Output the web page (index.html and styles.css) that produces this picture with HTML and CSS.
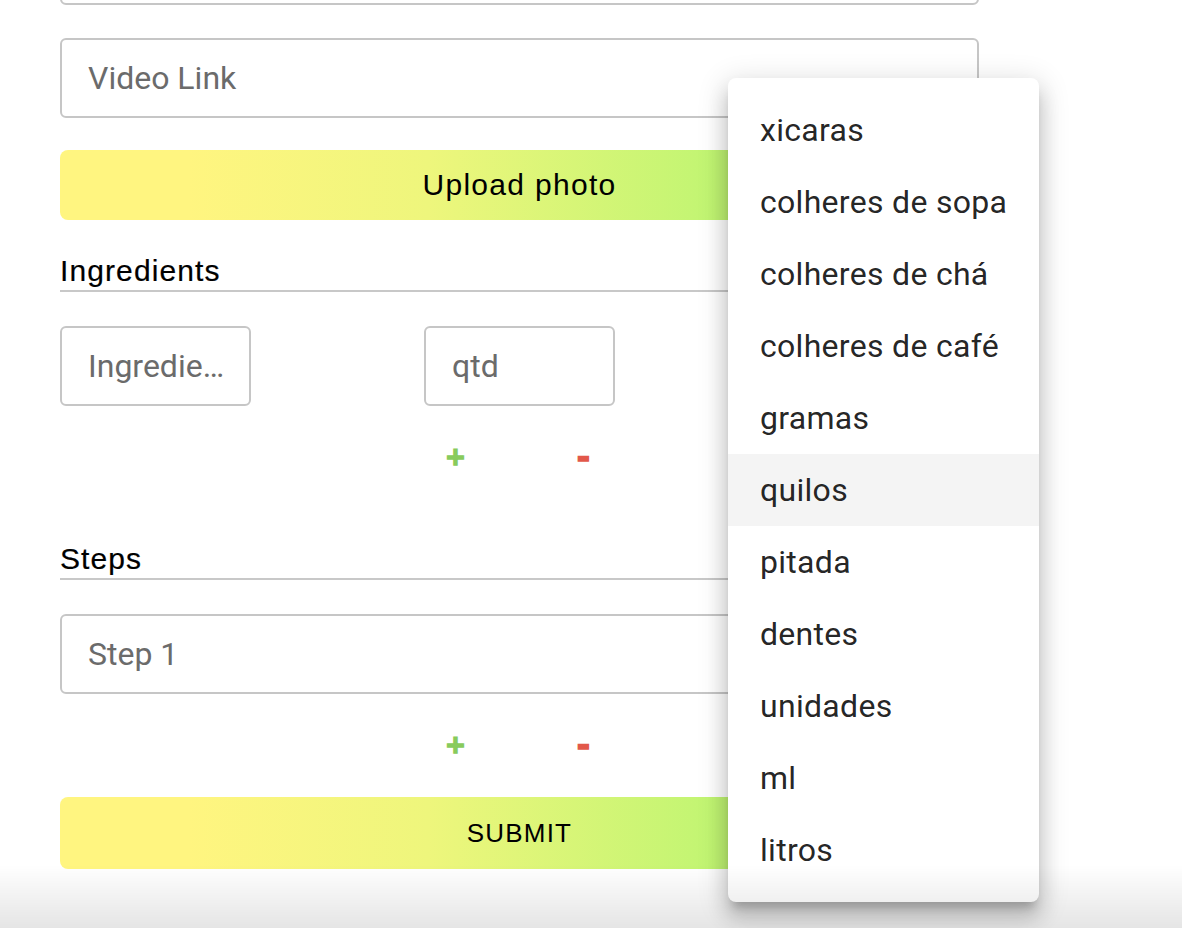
FILE: index.html
```html
<!DOCTYPE html>
<html lang="en">
<head>
<meta charset="utf-8">
<title>New recipe</title>
<link rel="stylesheet" href="styles.css">
</head>
<body>
<main class="page">
  <form class="recipe-form">
    <input class="field field--wide" type="text" placeholder="Description">
    <input class="field field--wide field--next" type="text" placeholder="Video Link">
    <button class="grad-btn grad-btn--upload" type="button">Upload photo</button>

    <section class="group group--ingredients">
      <h2 class="group-title">Ingredients</h2>
      <div class="ing-row">
        <input class="field field--small" type="text" placeholder="Ingredient">
        <input class="field field--small" type="text" placeholder="qtd">
        <div class="field field--small field--select"></div>
      </div>
      <div class="pm-row">
        <button class="pm-btn pm-btn--plus" type="button">+</button>
        <button class="pm-btn pm-btn--minus" type="button">-</button>
      </div>
    </section>

    <section class="group group--steps">
      <h2 class="group-title">Steps</h2>
      <input class="field field--wide field--step" type="text" placeholder="Step 1">
      <div class="pm-row">
        <button class="pm-btn pm-btn--plus" type="button">+</button>
        <button class="pm-btn pm-btn--minus" type="button">-</button>
      </div>
    </section>

    <button class="grad-btn grad-btn--submit" type="button">SUBMIT</button>
  </form>
</main>

<ul class="menu" role="listbox">
  <li class="menu-item">xicaras</li>
  <li class="menu-item">colheres de sopa</li>
  <li class="menu-item">colheres de chá</li>
  <li class="menu-item">colheres de café</li>
  <li class="menu-item">gramas</li>
  <li class="menu-item menu-item--hover">quilos</li>
  <li class="menu-item">pitada</li>
  <li class="menu-item">dentes</li>
  <li class="menu-item">unidades</li>
  <li class="menu-item">ml</li>
  <li class="menu-item">litros</li>
</ul>

<div class="bottom-fade"></div>
</body>
</html>
```

FILE: styles.css
```css
* {
  box-sizing: border-box;
}

html,
body {
  margin: 0;
  height: 100%;
  overflow: hidden;
  background: #ffffff;
}

body {
  font-family: "Liberation Sans", Arial, sans-serif;
  color: #000;
}

.page {
  padding-left: 60px;
  width: 979px;
}

.recipe-form {
  display: flex;
  flex-direction: column;
  margin-top: -75px;
}

.field {
  display: block;
  height: 80px;
  border: 2px solid #c6c6c6;
  border-radius: 6px;
  padding: 0 24px 0 26px;
  font-family: Roboto, "Noto Sans", sans-serif;
  font-size: 32px;
  color: #222;
  background: #fff;
  outline: none;
  text-overflow: ellipsis;
  margin: 0;
}

.field::placeholder {
  color: #6b6b6b;
  opacity: 1;
}

.field--wide {
  width: 100%;
}

.field--next {
  margin-top: 33px;
}

.field--small {
  width: 191px;
}

.grad-btn {
  display: block;
  width: 100%;
  border: 0;
  border-radius: 8px;
  background: linear-gradient(to right, #fff580 14%, #eef67c 40%, #c0f572 72%, #a9ef66 100%);
  font-family: "Liberation Sans", Arial, sans-serif;
  color: #000;
  padding: 0;
  cursor: pointer;
}

.grad-btn--upload {
  height: 70px;
  margin-top: 32px;
  font-size: 30px;
  letter-spacing: 1.3px;
}

.grad-btn--submit {
  height: 72px;
  margin-top: 32px;
  font-size: 26px;
  letter-spacing: 1.2px;
}

.group {
  display: flex;
  flex-direction: column;
}

.group--ingredients {
  margin-top: 35px;
}

.group--steps {
  margin-top: 66px;
}

.group-title {
  margin: 0;
  font-weight: 400;
  font-size: 30px;
  line-height: 32px;
  letter-spacing: 1.1px;
  padding-bottom: 3px;
  border-bottom: 2px solid #c8c8c8;
  -webkit-text-stroke: 0.2px #000;
}

.ing-row {
  display: flex;
  justify-content: space-between;
  margin-top: 34px;
}

.field--step {
  margin-top: 34px;
}

.pm-row {
  display: flex;
  justify-content: center;
  gap: 88px;
  height: 40px;
  margin-top: 31px;
}

.pm-btn {
  width: 40px;
  height: 40px;
  padding: 0;
  border: 0;
  background: none;
  font-family: "DejaVu Sans", sans-serif;
  font-weight: 700;
  line-height: 40px;
  cursor: pointer;
}

.pm-btn--plus {
  color: #88cb5c;
  font-size: 25px;
  -webkit-text-stroke: 1.6px #88cb5c;
}

.pm-btn--minus {
  color: #e2584a;
  font-size: 32px;
  -webkit-text-stroke: 1.6px #e2584a;
}

.menu {
  position: absolute;
  left: 728px;
  top: 78px;
  width: 311px;
  margin: 0;
  padding: 16px 0;
  list-style: none;
  background: #fff;
  border-radius: 8px;
  box-shadow: 0 10px 10px -5px rgba(0, 0, 0, 0.2),
              0 16px 20px 2px rgba(0, 0, 0, 0.14),
              0 6px 28px 5px rgba(0, 0, 0, 0.12);
}

.menu-item {
  height: 72px;
  line-height: 72px;
  padding-left: 32px;
  font-family: Roboto, "Noto Sans", sans-serif;
  font-size: 32px;
  letter-spacing: 0.3px;
  color: rgba(0, 0, 0, 0.87);
  white-space: nowrap;
}

.menu-item--hover {
  background: #f4f4f4;
}

.bottom-fade {
  position: fixed;
  left: 0;
  right: 0;
  bottom: 0;
  height: 63px;
  background: linear-gradient(to bottom, rgba(0, 0, 0, 0), rgba(0, 0, 0, 0.1));
  pointer-events: none;
}
```
